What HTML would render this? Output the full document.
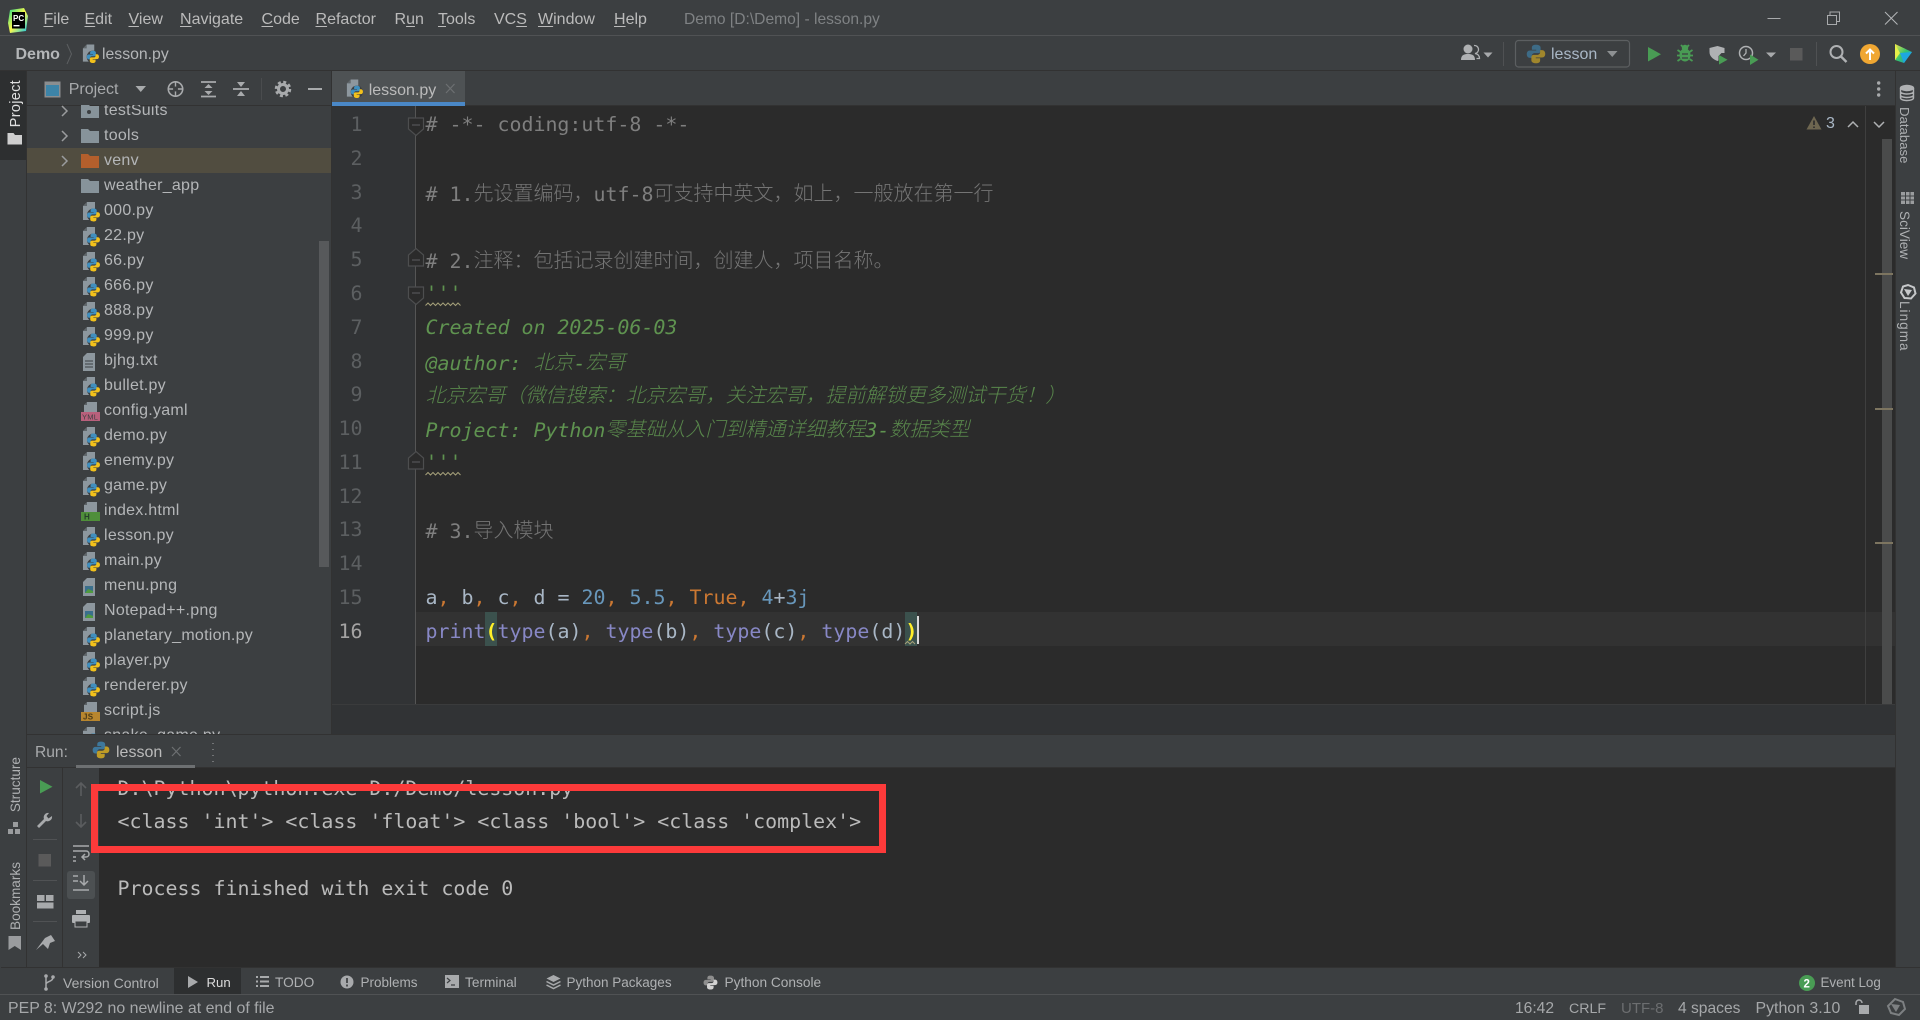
<!DOCTYPE html>
<html><head><meta charset="utf-8"><title>lesson.py</title>
<style>
*{margin:0;padding:0;box-sizing:border-box}
html,body{width:1920px;height:1020px;overflow:hidden;background:#3c3f41}
body{position:relative;font-family:"Liberation Sans","Noto Sans CJK SC",sans-serif;color:#bbb}
.a{position:absolute;white-space:pre}
.b{position:absolute}
.m{font-size:16px;line-height:20px;top:10px;color:#bbb}
.m u{text-decoration:underline;text-underline-offset:2px}
.t{font-size:13.7px;line-height:18px;top:974px;color:#afb1b3}
.s{font-size:15.6px;line-height:20px;top:999px;color:#a6a8aa}
#tree{position:absolute;left:27px;top:105px;width:304px;height:629px;overflow:hidden}
#tree .in{position:absolute;left:0;top:-7px;width:304px}
.r{position:relative;height:25px;line-height:26.5px;font-size:16px;letter-spacing:.26px;padding-left:77px;color:#b4b6b8;white-space:pre}
.r svg{position:absolute;left:54px;top:3.5px}
.sel{background:#514d40}
.r svg.ch{left:34px;top:7px;width:8px;height:12px}
.c{position:absolute;left:425.5px;height:33.8px;margin-top:.7px;font:19.93px/33.8px "DejaVu Sans Mono","Liberation Mono",monospace;white-space:pre}
.c b{font:20px/33.8px "Noto Sans CJK SC","WenQuanYi Zen Hei",sans-serif;font-weight:300;position:relative;top:-1px;opacity:.88}
.cm{color:#7f7f7f}
.g{color:#5f9350;font-style:italic}
.g b{font-style:italic}
.n{position:absolute;left:323.5px;width:39px;margin-top:.7px;text-align:right;font:19.93px/33.8px "DejaVu Sans Mono",monospace;color:#5c5f61;height:33.8px}
.o{color:#cc7832}.nu{color:#6897bb}.w{color:#a9b7c6}.p{color:#8888c6}
.k{position:absolute;left:117.5px;font:19.93px/33.4px "DejaVu Sans Mono",monospace;color:#bbb;white-space:pre}
.v{position:absolute;writing-mode:vertical-rl;white-space:pre;font-size:13.6px;line-height:16px;color:#afb1b3}
.vl{transform:rotate(180deg)}
</style></head>
<body>
<svg width="0" height="0" style="position:absolute"><defs>
<symbol id="pyl" viewBox="0 0 16 16">
<path fill="#3f8fbf" d="M8 .6C5.4.6 4.7 1.6 4.7 3v1.6H8.2v.6H3.2C1.6 5.2.6 6.3.6 8.1s1 3 2.6 3h1.5V9.5c0-1.3 1-2.200 2.200-2.200h3c1 0 1.800-.8 1.800-1.800V3C11.700 1.600 10.500.6 8 .6z"/>
<path fill="#f2c11c" d="M8 15.400c2.600 0 3.300-1 3.300-2.400v-1.600H7.800v-.6h5c1.600 0 2.600-1.100 2.600-2.900s-1-3-2.600-3h-1.500v1.600c0 1.300-1 2.200-2.200 2.200h-3c-1 0-1.800.8-1.800 1.800V13c0 1.400 1.200 2.400 3.700 2.400z"/>
</symbol>
<symbol id="py" viewBox="0 0 19 20">
<path fill="#8d979e" d="M6 0h8v8H8v10H2V4z"/><path fill="#3c3f41" d="M6 0v4H2z" opacity=".55"/>
<circle cx="12.500" cy="13" r="6.500" fill="#3c3f41"/>
<use href="#pyl" x="5.500" y="6" width="14" height="14"/>
</symbol>
<symbol id="doc" viewBox="0 0 19 20"><path fill="#8d979e" d="M6 0h10v12H3V3z"/><path fill="#3c3f41" d="M6 0v3H3z" opacity=".6"/></symbol>
<symbol id="fold" viewBox="0 0 18 14"><path fill="#87939a" d="M0 0h7l2 2h9v12H0z"/></symbol>
</defs></svg>

<!-- backgrounds -->
<div class="b" style="left:0;top:35px;width:1920px;height:1px;background:#505254"></div>
<div class="b" style="left:0;top:70px;width:1920px;height:1px;background:#323232"></div>
<div class="b" style="left:0;top:71px;width:27px;height:89px;background:#2d2f30"></div>
<div class="b" style="left:26px;top:71px;width:1px;height:896px;background:#323232"></div>
<div class="b" style="left:27px;top:105px;width:305px;height:1px;background:#323232"></div>
<div class="b" style="left:331px;top:71px;width:1px;height:663px;background:#323232"></div>
<div class="b" style="left:332px;top:105px;width:1563px;height:1px;background:#323232"></div>
<div class="b" style="left:332px;top:106px;width:83px;height:598px;background:#313335"></div>
<div class="b" style="left:416px;top:106px;width:1479px;height:598px;background:#2b2b2b"></div>
<div class="b" style="left:416px;top:612px;width:1479px;height:34px;background:#323232"></div>
<div class="b" style="left:485px;top:612px;width:12px;height:34px;background:#3b514d"></div>
<div class="b" style="left:905px;top:612px;width:12px;height:34px;background:#3b514d"></div>
<div class="b" style="left:917px;top:616px;width:2px;height:28px;background:#d8d8d8"></div>
<div class="b" style="left:332px;top:704px;width:1563px;height:30px;background:#313335;border-top:1px solid #3a3b3c"></div>
<div class="b" style="left:415px;top:106px;width:1px;height:598px;background:#555"></div>
<div class="b" style="left:1865px;top:106px;width:1px;height:598px;background:#3f3f3f"></div>
<div class="b" style="left:1882px;top:139px;width:10px;height:565px;background:#4a4b4b"></div>
<div class="b" style="left:1875px;top:272.500px;width:18px;height:2px;background:#7d7560"></div>
<div class="b" style="left:1875px;top:408px;width:18px;height:2px;background:#7d7560"></div>
<div class="b" style="left:1875px;top:542px;width:18px;height:2px;background:#7d7560"></div>
<div class="b" style="left:1895px;top:71px;width:1px;height:896px;background:#323232"></div>
<div class="b" style="left:27px;top:734px;width:1868px;height:1px;background:#323232"></div>
<div class="b" style="left:99px;top:768px;width:1796px;height:199px;background:#2b2b2b"></div>
<div class="b" style="left:27px;top:767px;width:1868px;height:1px;background:#323232"></div>
<div class="b" style="left:62px;top:768px;width:1px;height:199px;background:#323232"></div>
<div class="b" style="left:76px;top:765px;width:119px;height:3px;background:#6d7072"></div>
<div class="b" style="left:1px;top:967px;width:1919px;height:1px;background:#323232"></div>
<div class="b" style="left:174px;top:968px;width:67px;height:26px;background:#2d2f30"></div>
<div class="b" style="left:0;top:994px;width:1920px;height:1px;background:#505254"></div>
<div class="b" style="left:319px;top:240.500px;width:10px;height:326px;background:#57595b;z-index:3"></div>
<!-- tab -->
<div class="b" style="left:332px;top:71px;width:133px;height:31px;background:#4e5254"></div>
<div class="b" style="left:332px;top:102px;width:133px;height:4px;background:#4a88c7"></div>

<!-- menu -->
<div class="a m" style="left:43.500px"><u>F</u>ile</div>
<div class="a m" style="left:84.500px"><u>E</u>dit</div>
<div class="a m" style="left:128.500px"><u>V</u>iew</div>
<div class="a m" style="left:180px"><u>N</u>avigate</div>
<div class="a m" style="left:261.500px"><u>C</u>ode</div>
<div class="a m" style="left:315.500px"><u>R</u>efactor</div>
<div class="a m" style="left:394.500px">R<u>u</u>n</div>
<div class="a m" style="left:438px"><u>T</u>ools</div>
<div class="a m" style="left:494px">VC<u>S</u></div>
<div class="a m" style="left:538px"><u>W</u>indow</div>
<div class="a m" style="left:614px"><u>H</u>elp</div>
<div class="a m" style="left:684px;color:#7f8284;font-size:15.600px">Demo [D:\Demo] - lesson.py</div>

<!-- nav -->
<div class="a" style="left:15.500px;top:45px;font-size:16px;line-height:20px;font-weight:bold;color:#b4b6b8">Demo</div>
<div class="a" style="left:102px;top:45px;font-size:15.800px;line-height:20px;color:#b4b6b8">lesson.py</div>
<div class="a" style="left:68.700px;top:80px;font-size:16px;line-height:20px;color:#a8aaac">Project</div>
<div class="a" style="left:368.700px;top:80.500px;font-size:16px;line-height:20px;color:#bbb">lesson.py</div>
<div class="a" style="left:1551px;top:45px;font-size:16px;line-height:20px;color:#a9b7c6">lesson</div>

<!-- tree -->
<div id="tree"><div class="in">
<div class="r"><svg class="ch" viewBox="0 0 8 12"><path d="M1 1l5 5-5 5" fill="none" stroke="#9a9c9e" stroke-width="1.500"/></svg><svg width="18" height="20" style="top:6px"><use href="#fold" width="18" height="14"/><circle cx="8" cy="8" r="2" fill="#3c3f41"/></svg>testSuits</div>
<div class="r"><svg class="ch" viewBox="0 0 8 12"><path d="M1 1l5 5-5 5" fill="none" stroke="#9a9c9e" stroke-width="1.500"/></svg><svg width="18" height="20" style="top:6px"><use href="#fold" width="18" height="14"/></svg>tools</div>
<div class="r sel"><svg class="ch" viewBox="0 0 8 12"><path d="M1 1l5 5-5 5" fill="none" stroke="#9a9c9e" stroke-width="1.500"/></svg><svg width="18" height="20" style="top:6px"><path fill="#b45f2c" d="M0 0h7l2 2h9v12H0z"/></svg>venv</div>
<div class="r"><svg width="18" height="20" style="top:6px"><use href="#fold" width="18" height="14"/></svg>weather_app</div>
<div class="r"><svg width="19" height="20"><use href="#py"/></svg>000.py</div>
<div class="r"><svg width="19" height="20"><use href="#py"/></svg>22.py</div>
<div class="r"><svg width="19" height="20"><use href="#py"/></svg>66.py</div>
<div class="r"><svg width="19" height="20"><use href="#py"/></svg>666.py</div>
<div class="r"><svg width="19" height="20"><use href="#py"/></svg>888.py</div>
<div class="r"><svg width="19" height="20"><use href="#py"/></svg>999.py</div>
<div class="r"><svg width="19" height="20"><path fill="#8d979e" d="M6 1h8v18H2V5z"/><path stroke="#3c3f41" stroke-width="1" d="M4 9h8M4 12h8M4 15h8"/></svg>bjhg.txt</div>
<div class="r"><svg width="19" height="20"><use href="#py"/></svg>bullet.py</div>
<div class="r"><svg width="19" height="20"><use href="#doc"/><rect x="0" y="10" width="19" height="9" fill="#b9607c"/><text x="1" y="17.500" font-size="7.500" fill="#3c3f41" font-family="Liberation Sans">YML</text></svg>config.yaml</div>
<div class="r"><svg width="19" height="20"><use href="#py"/></svg>demo.py</div>
<div class="r"><svg width="19" height="20"><use href="#py"/></svg>enemy.py</div>
<div class="r"><svg width="19" height="20"><use href="#py"/></svg>game.py</div>
<div class="r"><svg width="19" height="20"><use href="#doc"/><rect x="0" y="10" width="19" height="9" fill="#4f8f3a"/><text x="3" y="17.500" font-size="8" font-weight="bold" fill="#25402a" font-family="Liberation Sans">H</text></svg>index.html</div>
<div class="r"><svg width="19" height="20"><use href="#py"/></svg>lesson.py</div>
<div class="r"><svg width="19" height="20"><use href="#py"/></svg>main.py</div>
<div class="r"><svg width="19" height="20"><path fill="#8d979e" d="M6 1h8v18H2V5z"/><rect x="4" y="9" width="8" height="7" fill="#3a6f8c"/><path d="M4 16l3-4 5 2v2z" fill="#4f9a3f"/></svg>menu.png</div>
<div class="r"><svg width="19" height="20"><path fill="#8d979e" d="M6 1h8v18H2V5z"/><rect x="4" y="9" width="8" height="7" fill="#3a6f8c"/><path d="M4 16l3-4 5 2v2z" fill="#4f9a3f"/></svg>Notepad++.png</div>
<div class="r"><svg width="19" height="20"><use href="#py"/></svg>planetary_motion.py</div>
<div class="r"><svg width="19" height="20"><use href="#py"/></svg>player.py</div>
<div class="r"><svg width="19" height="20"><use href="#py"/></svg>renderer.py</div>
<div class="r"><svg width="19" height="20"><use href="#doc"/><rect x="0" y="10" width="19" height="9" fill="#b8862e"/><text x="2" y="17.500" font-size="8" font-weight="bold" fill="#4b3a17" font-family="Liberation Sans">JS</text></svg>script.js</div>
<div class="r"><svg width="19" height="20"><use href="#py"/></svg>snake_game.py</div>
</div></div>

<!-- line numbers -->
<div class="n" style="top:107.400px">1</div>
<div class="n" style="top:141.200px">2</div>
<div class="n" style="top:175px">3</div>
<div class="n" style="top:208.700px">4</div>
<div class="n" style="top:242.500px">5</div>
<div class="n" style="top:276.300px">6</div>
<div class="n" style="top:310.100px">7</div>
<div class="n" style="top:343.900px">8</div>
<div class="n" style="top:377.600px">9</div>
<div class="n" style="top:411.400px">10</div>
<div class="n" style="top:445.200px">11</div>
<div class="n" style="top:479px">12</div>
<div class="n" style="top:512.800px">13</div>
<div class="n" style="top:546.500px">14</div>
<div class="n" style="top:580.300px">15</div>
<div class="n" style="top:614.100px;color:#a4a3a3">16</div>

<!-- code -->
<div class="c cm" style="top:107.400px"># -*- coding:utf-8 -*-</div>
<div class="c cm" style="top:175px"># 1.<b>先设置编码，</b>utf-8<b>可支持中英文，如上，一般放在第一行</b></div>
<div class="c cm" style="top:242.500px"># 2.<b>注释：包括记录创建时间，创建人，项目名称。</b></div>
<div class="c g" style="top:276.300px">'''</div>
<div class="c g" style="top:310.100px">Created on 2025-06-03</div>
<div class="c g" style="top:343.900px">@author: <b>北京</b>-<b>宏哥</b></div>
<div class="c g" style="top:377.600px"><b>北京宏哥（微信搜索：北京宏哥，关注宏哥，提前解锁更多测试干货！）</b></div>
<div class="c g" style="top:411.400px">Project: Python<b>零基础从入门到精通详细教程</b>3-<b>数据类型</b></div>
<div class="c g" style="top:445.200px">'''</div>
<div class="c cm" style="top:512.800px"># 3.<b>导入模块</b></div>
<div class="c w" style="top:580.300px">a<span class="o">,</span> b<span class="o">,</span> c<span class="o">,</span> d = <span class="nu">20</span><span class="o">,</span> <span class="nu">5.5</span><span class="o">,</span> <span class="o">True,</span> <span class="nu">4</span>+<span class="nu">3j</span></div>
<div class="c w" style="top:614.100px"><span class="p">print</span><span style="color:#ffef28;font-weight:bold">(</span><span class="p">type</span>(a)<span class="o">,</span> <span class="p">type</span>(b)<span class="o">,</span> <span class="p">type</span>(c)<span class="o">,</span> <span class="p">type</span>(d)<span style="color:#ffef28;font-weight:bold">)</span></div>

<!-- run panel text -->
<div class="a" style="left:35px;top:743px;font-size:15.600px;line-height:20px;color:#a8aaac">Run:</div>
<div class="a" style="left:116px;top:743px;font-size:16px;line-height:20px;color:#bbb">lesson</div>
<div class="k" style="top:772px">D:\Python\python.exe D:/Demo/lesson.py</div>
<div class="k" style="top:805px">&lt;class 'int'&gt; &lt;class 'float'&gt; &lt;class 'bool'&gt; &lt;class 'complex'&gt;</div>
<div class="k" style="top:872px">Process finished with exit code 0</div>
<div class="b" style="left:91px;top:784px;width:794.500px;height:69px;border:7px solid #fc3a3a;z-index:4"></div>

<!-- tool bars -->
<div class="a t" style="left:63px;font-size:14px">Version Control</div>
<div class="a t" style="left:206.500px;color:#dcdcdc;font-size:13.200px">Run</div>
<div class="a t" style="left:275px">TODO</div>
<div class="a t" style="left:360.500px;font-size:13.500px">Problems</div>
<div class="a t" style="left:465px">Terminal</div>
<div class="a t" style="left:566.500px;font-size:13.500px">Python Packages</div>
<div class="a t" style="left:724.500px">Python Console</div>
<div class="a t" style="left:1820.500px;font-size:13.400px">Event Log</div>
<div class="a s" style="left:8px;font-size:15.900px">PEP 8: W292 no newline at end of file</div>
<div class="a s" style="left:1515px">16:42</div>
<div class="a s" style="left:1569px;font-size:14.200px">CRLF</div>
<div class="a s" style="left:1621px;color:#6c6e70;font-size:15px">UTF-8</div>
<div class="a s" style="left:1678px">4 spaces</div>
<div class="a s" style="left:1755.500px;font-size:15.900px">Python 3.10</div>

<!-- stripes -->
<div class="v vl" style="left:8px;top:80px;color:#e0e0e0;font-size:14.500px;letter-spacing:.3px">Project</div>
<div class="v vl" style="left:8px;top:757px">Structure</div>
<div class="v vl" style="left:8px;top:862px">Bookmarks</div>
<div class="v" style="left:1896px;top:107px;font-size:13.200px">Database</div>
<div class="v" style="left:1896px;top:211px">SciView</div>
<div class="v" style="left:1896px;top:301px;letter-spacing:1px">Lingma</div>
<div class="a" style="left:1826px;top:113px;font-size:16px;line-height:22px;color:#a9b7c6">3</div>

<!-- icons overlay -->
<svg class="b" style="left:0;top:0;z-index:2" width="1920" height="1020" viewBox="0 0 1920 1020">
<!-- logo -->
<defs><linearGradient id="lg" x1="0" y1="0" x2="1" y2="1"><stop offset="0" stop-color="#21d789"/><stop offset=".5" stop-color="#fcf84a"/><stop offset="1" stop-color="#07c3f2"/></linearGradient>
<linearGradient id="cg" x1="0" y1="0" x2="1" y2="1"><stop offset="0" stop-color="#f5e34a"/><stop offset=".5" stop-color="#35c46e"/><stop offset="1" stop-color="#1c8fe0"/></linearGradient></defs>
<path d="M10 10l14-2 4 8-2 15-16 2-2-10z" fill="url(#lg)"/>
<rect x="12" y="12" width="13" height="16.500" fill="#000"/>
<text x="13" y="21" font-size="8" font-weight="bold" fill="#fff" font-family="Liberation Sans">PC</text>
<rect x="13.500" y="25" width="6" height="1.400" fill="#fff"/>
<!-- window controls -->
<path d="M1767.500 18.500h13" stroke="#a8aaac" stroke-width="1"/>
<path d="M1827.500 15.500h9v9h-9zM1830 15v-3h9.500v9.500h-3" fill="none" stroke="#a8aaac"/>
<path d="M1885 12l12.500 12.500M1897.500 12L1885 24.500" stroke="#b4b6b8"/>
<!-- nav icons -->
<path d="M67 44l4.500 10-4.500 10" fill="none" stroke="#5c5f61"/>
<use href="#py" x="81" y="44" width="18" height="20"/>
<rect x="44.500" y="81.500" width="16" height="16" fill="#8b8e90"/><rect x="46" y="85" width="13" height="11" fill="#3d84a8"/>
<path d="M135.500 86h10.500l-5.250 6z" fill="#a8aaac"/>
<circle cx="175.500" cy="89" r="7.200" fill="none" stroke="#a8aaac" stroke-width="1.600"/><path d="M175.500 81v16M167.500 89h16" stroke="#a8aaac" stroke-width="1.400"/><circle cx="175.500" cy="89" r="2.500" fill="#3c3f41"/>
<path d="M201 82h15M201 96.500h15" stroke="#a8aaac" stroke-width="1.800"/><path d="M208.500 84l4 4h-8zM208.500 95l4-4h-8z" fill="#a8aaac"/>
<path d="M233 89h16" stroke="#a8aaac" stroke-width="1.800"/><path d="M241 87l4-5h-8zM241 91l4 5h-8z" fill="#a8aaac"/>
<path d="M261.500 78v22" stroke="#4a4c4e"/>
<circle cx="283" cy="89" r="4.500" fill="none" stroke="#a8aaac" stroke-width="3"/><circle cx="283" cy="89" r="7" fill="none" stroke="#a8aaac" stroke-width="2.500" stroke-dasharray="3 2.500"/>
<path d="M308 89h14" stroke="#a8aaac" stroke-width="2"/>
<use href="#py" x="345" y="79" width="18" height="20"/>
<path d="M446 84l8.500 9M454.500 84l-8.500 9" stroke="#6d7072" stroke-width="1.200"/>
<!-- top right -->
<circle cx="1468" cy="49" r="4.500" fill="#afb1b3"/><path d="M1461 60c0-5 3-6 7-6s7 1 7 6z" fill="#afb1b3"/><path d="M1474 45.500a4 4 0 0 1 1 8c3 .5 4.500 2 4.500 5h-3" fill="none" stroke="#afb1b3" stroke-width="1.300"/>
<path d="M1483.500 52.500h9l-4.500 5z" fill="#a8aaac"/>
<path d="M1503.500 42v24" stroke="#4f5153"/>
<rect x="1515.500" y="40.500" width="114" height="26.500" rx="3" fill="none" stroke="#5c5f61" stroke-width="1.200"/>
<g opacity=".55"><use href="#pyl" x="1526" y="44" width="20" height="20"/></g>
<path d="M1607 51h10.500l-5.250 6z" fill="#8d9092"/>
<path d="M1648 47v14.500l13-7.250z" fill="#499c54"/>
<path d="M1677.500 50l3 2M1692.500 50l-3 2M1677 55.500h3M1693 55.500h-3M1677.500 61l3-2M1692.500 61l-3-2M1681 45l2 2M1689 45l-2 2" stroke="#499c54" stroke-width="1.800"/>
<ellipse cx="1685" cy="55" rx="5.500" ry="6.500" fill="#499c54"/><circle cx="1685" cy="48" r="3.200" fill="#499c54"/><path d="M1682 54h6M1682 58h6" stroke="#3c3f41" stroke-width="1.300"/>
<path d="M1709.500 48l8-2 7 2v5h-3l-3 3v4.500l-1 .5c-5-2-8-5-8-9z" fill="#afb1b3"/><path d="M1719 55v9.500l8.500-4.750z" fill="#499c54"/>
<circle cx="1746" cy="53" r="6.500" fill="none" stroke="#afb1b3" stroke-width="1.500"/><path d="M1746 49v4l-2.500 3" fill="none" stroke="#afb1b3" stroke-width="1.300"/><path d="M1750 54.500v10.500l8.500-5.250z" fill="#499c54"/>
<path d="M1766 52.500h10l-5 5z" fill="#a8aaac"/>
<rect x="1790" y="48" width="12.500" height="12.500" fill="#5a5a5a"/>
<path d="M1816.500 42v24" stroke="#4f5153"/>
<circle cx="1836.500" cy="52" r="6" fill="none" stroke="#afb1b3" stroke-width="2"/><path d="M1841 56.500l5.500 5.500" stroke="#afb1b3" stroke-width="2.400"/>
<circle cx="1870" cy="54" r="10" fill="#f0a732"/><path d="M1870 60v-10M1866 53.500l4-4 4 4" fill="none" stroke="#fff" stroke-width="2"/>
<path d="M1895 44l17 8-8 11-9-3z" fill="url(#cg)"/><path d="M1895 44l5 9-5 7z" fill="#e6f04a"/><path d="M1900 53l12-1-8 11z" fill="#1ea7e0"/>
<circle cx="1878.700" cy="83" r="1.700" fill="#a8aaac"/><circle cx="1878.700" cy="89" r="1.700" fill="#a8aaac"/><circle cx="1878.700" cy="95" r="1.700" fill="#a8aaac"/>
<path d="M1814 116l7.500 13.500h-15z" fill="#6e6650"/><path d="M1814 120.500v4.500M1814 126.500v1.500" stroke="#2b2b2b" stroke-width="1.600"/>
<path d="M1848 127l5-5 5 5M1874 122l5 5 5-5" fill="none" stroke="#afb1b3" stroke-width="1.500"/>
<!-- fold -->
<g fill="#2b2b2b" stroke="#4d4e4f" stroke-width="1.200">
<path d="M408.500 118h15v11l-7.500 6.500-7.500-6.500z"/><path d="M408.500 266h15v-11l-7.500-6.500-7.500 6.500z"/><path d="M408.500 287h15v11l-7.500 6.500-7.500-6.500z"/><path d="M408.500 469h15v-11l-7.500-6.500-7.500 6.500z"/>
</g>
<path d="M412 125h8M412 260h8M412 293h8M412 462h8" stroke="#5c5e60" stroke-width="1"/>
<path d="M425.500 305.500l2.500-2.500 2.500 2.500 2.500-2.500 2.500 2.500 2.500-2.500 2.500 2.500 2.500-2.500 2.500 2.500 2.500-2.500 2.500 2.500 2.500-2.500 2.500 2.500 2.500-2.500 2.500 2.500M425.500 475l2.500-2.500 2.500 2.500 2.500-2.500 2.500 2.500 2.500-2.500 2.500 2.500 2.500-2.500 2.500 2.500 2.500-2.500 2.500 2.500 2.500-2.500 2.500 2.500 2.500-2.500 2.500 2.500M905 644l2.500-2.500 2.500 2.500 2.500-2.500 2.500 2.500" fill="none" stroke="#a5a07a" stroke-width="1"/>
<!-- left stripe icons -->
<path d="M7.500 133h6l1.500 2h7v9.500H7.500z" fill="#cfcfcf"/>
<path d="M13 822h5v5h-5zM8 829h5v5H8zM15 829h5v5h-5z" fill="#9a9c9e"/>
<path d="M8.500 936h12.500v14l-6.250-4-6.250 4z" fill="#9a9c9e"/>
<!-- right stripe icons -->
<g fill="none" stroke="#afb1b3" stroke-width="1.400"><ellipse cx="1907" cy="88" rx="6.500" ry="2.500" fill="#afb1b3"/><path d="M1900.500 88v10c0 1.500 3 2.500 6.500 2.500s6.500-1 6.500-2.500V88M1900.500 91.500c0 1.500 3 2.500 6.500 2.500s6.500-1 6.500-2.500M1900.500 95c0 1.500 3 2.500 6.500 2.500s6.500-1 6.500-2.500"/></g>
<path d="M1901 192h13v12h-13z" fill="#9a9c9e"/><path d="M1901 196h13M1901 200h13M1905.500 192v12M1910 192v12" stroke="#3c3f41"/>
<path d="M1908 285l6 2.500 1.500 6-4.500 5-6.500-.5-3.500-5.500 2-6z" fill="none" stroke="#c6c8ca" stroke-width="2"/><path d="M1904 289l8 1-4 6z" fill="#c6c8ca"/>
<!-- run toolbar -->
<use href="#pyl" x="92" y="741" width="18" height="18" opacity=".72"/>
<path d="M172 747l8.500 9M180.500 747l-8.500 9" stroke="#6d7072" stroke-width="1.200"/>
<path d="M213 743v1M213 749v1M213 755v1M213 761v1" stroke="#a8aaac"/>
<path d="M40 780v13.500l12.500-6.750z" fill="#499c54"/>
<path d="M52 816a4.500 4.500 0 0 1-6 5l-7 7-2-2 7-7a4.500 4.500 0 0 1 5-6l-2.500 3 2 2.500z" fill="#a8aaac"/>
<path d="M33 839.500h24M33 880.500h24M33 921.500h24" stroke="#505254"/>
<rect x="38.500" y="854" width="12.500" height="12.500" fill="#5a5a5a"/>
<path d="M37 895h7.500v6H37zM46 895h7.500v6H46zM37 902.500h16.500v6H37z" fill="#a8aaac"/>
<path d="M45 938l6-3 4 6-5 2-2 6-5-5-7 6 6-8z" fill="#a8aaac"/>
<path d="M81 796v-13M76 788l5-5 5 5" fill="none" stroke="#5b5d5f" stroke-width="1.600"/>
<path d="M81 814v13M76 822l5 5 5-5" fill="none" stroke="#5b5d5f" stroke-width="1.600"/>
<path d="M73 846h16M73 851h13c4 0 4 6 0 6h-4M85 854l-3 3 3 3M73 857h3M73 861h3" fill="none" stroke="#a8aaac" stroke-width="1.500"/>
<rect x="67" y="871" width="28" height="28" rx="3" fill="#4c5052"/>
<path d="M73 876h5M73 881h5M73 890h16" stroke="#a8aaac" stroke-width="1.500"/><path d="M84 875v10M80 881l4 4 4-4" fill="none" stroke="#a8aaac" stroke-width="1.500"/>
<rect x="76" y="910" width="10" height="4" fill="#afb1b3"/><rect x="72" y="915" width="18" height="8" rx="1" fill="#afb1b3"/><rect x="75" y="921" width="12" height="6" fill="#3c3f41" stroke="#afb1b3"/>
<path d="M78 952l3 3-3 3M83 952l3 3-3 3" fill="none" stroke="#a8aaac"/>
<!-- bottom tool icons -->
<circle cx="46" cy="976" r="1.800" fill="#a8aaac"/><circle cx="46" cy="989" r="1.800" fill="#a8aaac"/><circle cx="53" cy="977" r="1.800" fill="#a8aaac"/><path d="M46 976v13M53 977c0 5-6 4-7 7" fill="none" stroke="#a8aaac" stroke-width="1.500"/>
<path d="M188 976v12l10-6z" fill="#a8aaac"/>
<path d="M260 977h9M260 981.500h9M260 986h9" stroke="#a8aaac" stroke-width="2"/><path d="M256 977h2M256 981.500h2M256 986h2" stroke="#a8aaac" stroke-width="2"/>
<circle cx="347" cy="982" r="6.500" fill="#a8aaac"/><path d="M347 978v5M347 984.500v2" stroke="#3c3f41" stroke-width="1.700"/>
<rect x="445" y="975" width="14" height="13" fill="#a8aaac"/><path d="M447 978l3 2.500-3 2.500M451 985h4" fill="none" stroke="#3c3f41" stroke-width="1.200"/>
<path d="M553.500 975l7 3.500-7 3.500-7-3.500z" fill="#a8aaac"/><path d="M546.500 981.500l7 3.500 7-3.500M546.500 985l7 3.500 7-3.500" fill="none" stroke="#a8aaac" stroke-width="1.500"/>
<use href="#pyl" x="703" y="975" width="15" height="15" style="filter:grayscale(1) brightness(1.100)"/>
<circle cx="1807" cy="983" r="8" fill="#499c54"/>
<text x="1803.500" y="987.500" font-size="11.500" font-weight="bold" fill="#fff" font-family="Liberation Sans">2</text>
<path d="M1856 1005v-2a3 3 0 0 1 6 0" fill="none" stroke="#a8aaac" stroke-width="1.500"/><rect x="1859" y="1005" width="10" height="9" fill="#a8aaac"/>
<path d="M1895 999l8 3 2 7-6 6-8-2-3-7z" fill="none" stroke="#7d8082" stroke-width="2"/><path d="M1891 1004l9 1-4 7z" fill="#7d8082"/>
</svg>
</body></html>
